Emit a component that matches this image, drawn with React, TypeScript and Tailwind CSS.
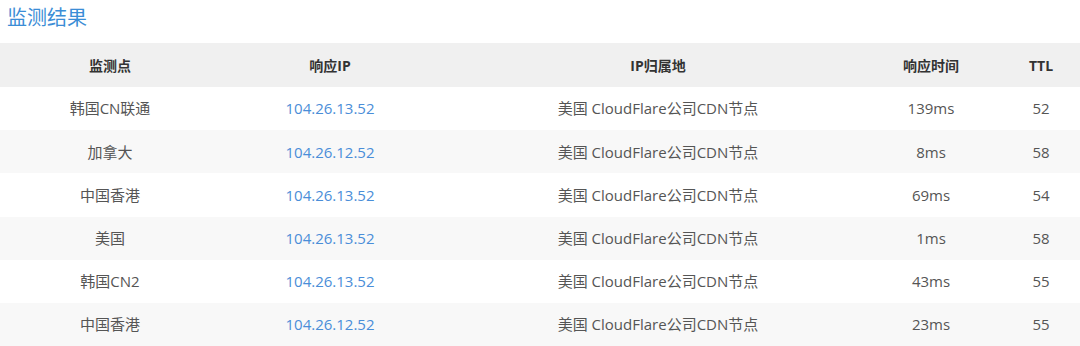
import React from 'react';

interface Row {
  point: string;
  ip: string;
  location: string;
  time: string;
  ttl: string;
}

const rows: Row[] = [
  { point: '韩国CN联通', ip: '104.26.13.52', location: '美国 CloudFlare公司CDN节点', time: '139ms', ttl: '52' },
  { point: '加拿大', ip: '104.26.12.52', location: '美国 CloudFlare公司CDN节点', time: '8ms', ttl: '58' },
  { point: '中国香港', ip: '104.26.13.52', location: '美国 CloudFlare公司CDN节点', time: '69ms', ttl: '54' },
  { point: '美国', ip: '104.26.13.52', location: '美国 CloudFlare公司CDN节点', time: '1ms', ttl: '58' },
  { point: '韩国CN2', ip: '104.26.13.52', location: '美国 CloudFlare公司CDN节点', time: '43ms', ttl: '55' },
  { point: '中国香港', ip: '104.26.12.52', location: '美国 CloudFlare公司CDN节点', time: '23ms', ttl: '55' },
];

const App: React.FC = () => {
  return (
    <div className="w-[1080px] h-[346px] overflow-hidden bg-white font-['Open_Sans','Noto_Sans_CJK_SC',sans-serif]">
      <h2 className="h-[43px] pl-[7px] pt-[3px] text-[20px] leading-[30px] text-[#3b8dd6]">监测结果</h2>
      <table className="table-fixed border-collapse w-[1096px]">
        <colgroup>
          <col className="w-[220px]" />
          <col className="w-[220px]" />
          <col className="w-[436px]" />
          <col className="w-[110px]" />
          <col className="w-[110px]" />
        </colgroup>
        <thead>
          <tr className="h-[44px] bg-[#f0f0f0] text-[#333] text-[14px] font-bold">
            <th className="text-center">监测点</th>
            <th className="text-center">响应IP</th>
            <th className="text-center">IP归属地</th>
            <th className="text-center">响应时间</th>
            <th className="text-center">TTL</th>
          </tr>
        </thead>
        <tbody>
          {rows.map((r, i) => (
            <tr key={i} className={(i % 2 === 0 ? 'bg-white' : 'bg-[#f8f8f8]') + ' h-[43.2px] text-[15px] text-[#555]'}>
              <td className="text-center">{r.point}</td>
              <td className="text-center text-[#4a8ed8]">{r.ip}</td>
              <td className="text-center">{r.location}</td>
              <td className="text-center">{r.time}</td>
              <td className="text-center">{r.ttl}</td>
            </tr>
          ))}
        </tbody>
      </table>
    </div>
  );
};

export default App;
